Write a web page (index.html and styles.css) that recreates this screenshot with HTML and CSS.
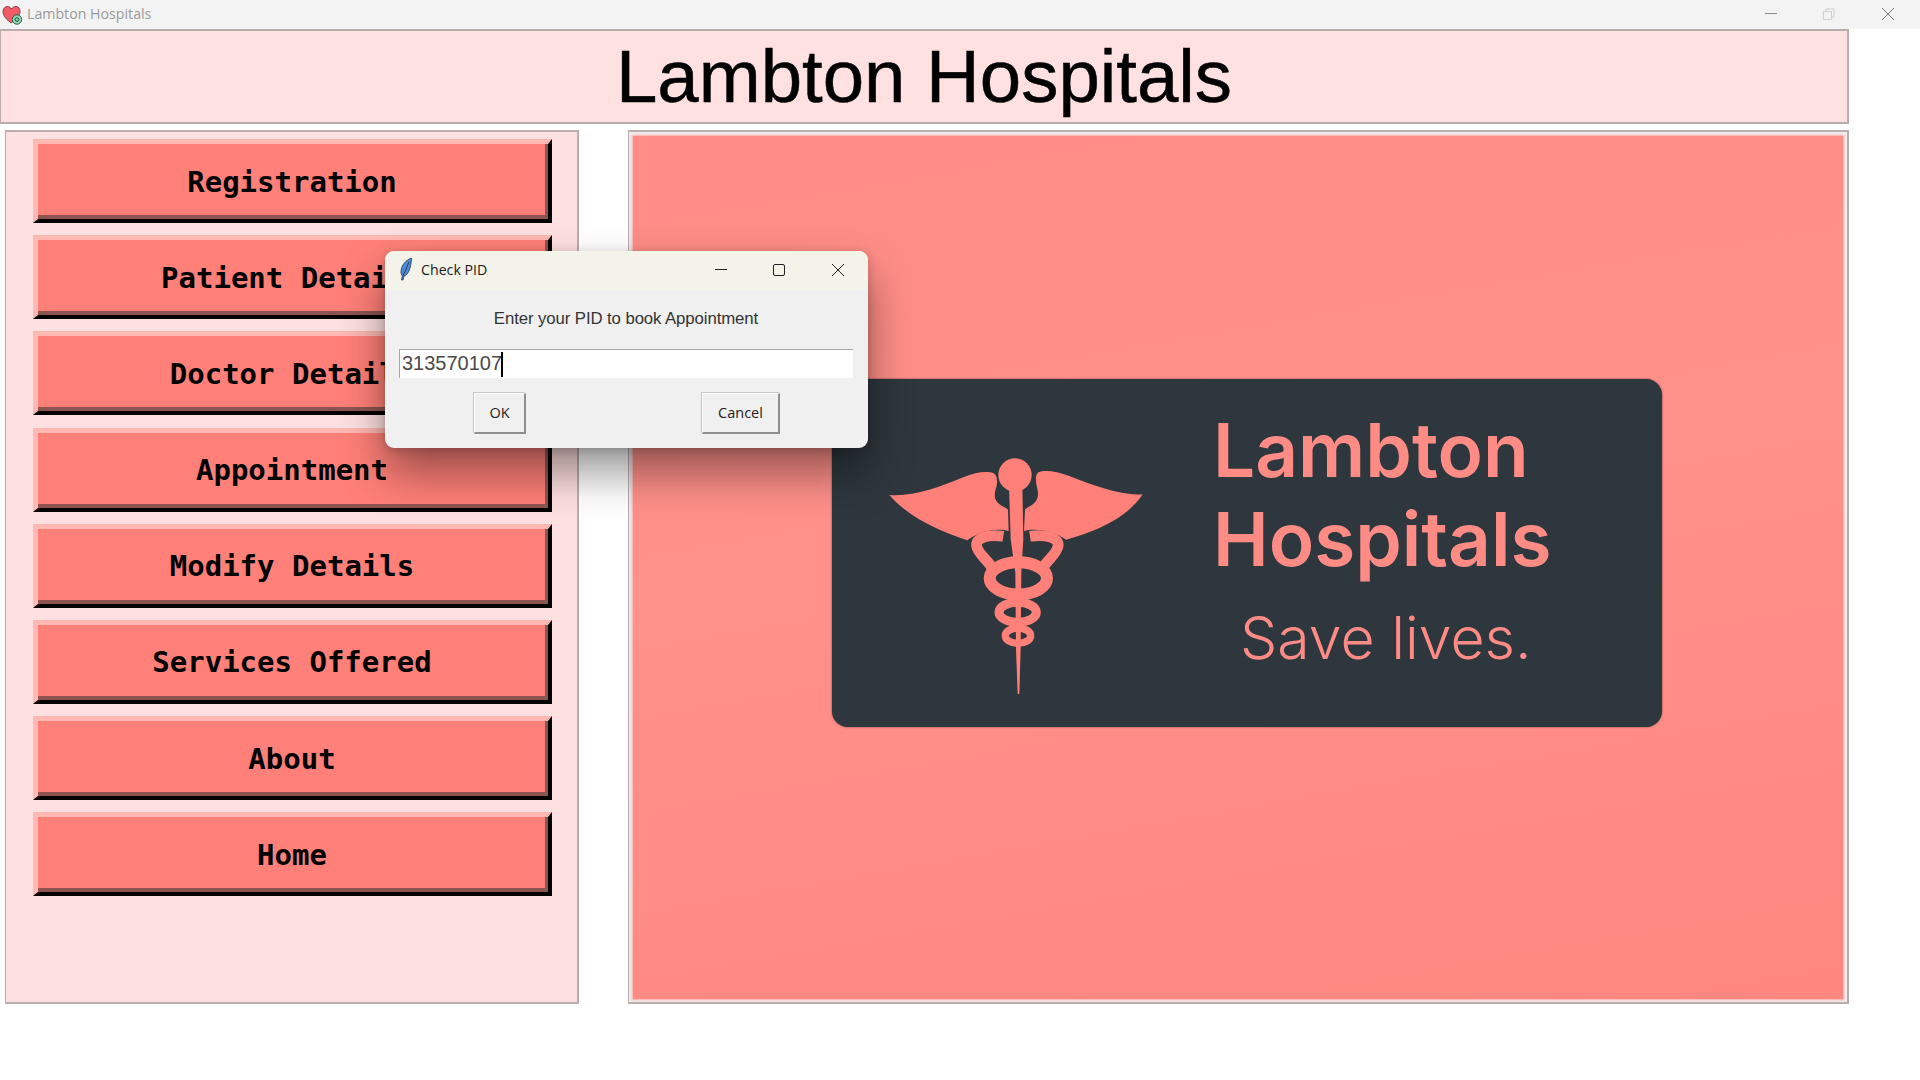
FILE: index.html
```html
<!DOCTYPE html>
<html lang="en">
<head>
<meta charset="utf-8">
<title>Lambton Hospitals</title>
<link rel="stylesheet" href="styles.css">
</head>
<body>
<div class="app">
  <div class="titlebar">
    <svg class="app-icon" viewBox="0 0 20 20" width="20" height="20">
      <path d="M9 18 C5 15 1 11 1 6.500 C1 3 3.500 1.500 5.500 1.500 C7.300 1.500 8.500 2.500 9.500 4 C10.500 2.500 12 1.500 14 1.500 C16.500 1.500 18 3.500 18 6.500 C18 11 13 15 9 18 Z" fill="#f25a68" stroke="#6e2a33" stroke-width="0.8"/>
      <circle cx="15" cy="14.500" r="4.700" fill="#8fd6b0" stroke="#2c5a4a" stroke-width="1"/>
      <circle cx="15" cy="14.500" r="1.800" fill="none" stroke="#1f4a3a" stroke-width="1"/>
    </svg>
    <span class="app-name">Lambton Hospitals</span>
    <div class="win-controls">
      <svg viewBox="0 0 14 14" width="14" height="14"><path d="M1 6.500H13" stroke="#8a8a8a" stroke-width="1" fill="none"/></svg>
      <svg viewBox="0 0 14 14" width="14" height="14"><path d="M1.500 4.500H9.500V12.500H1.500Z M4 4.500V2H12V10H9.500" stroke="#cfcfcf" stroke-width="1" fill="none"/></svg>
      <svg viewBox="0 0 14 14" width="14" height="14"><path d="M1 1L13 13M13 1L1 13" stroke="#7a7a7a" stroke-width="1" fill="none"/></svg>
    </div>
  </div>

  <header class="banner"><h1 class="banner-title">Lambton Hospitals</h1></header>

  <main class="columns">
    <nav class="menu">
      <button class="menu-btn"><span class="menu-face">Registration</span></button>
      <button class="menu-btn"><span class="menu-face">Patient Details</span></button>
      <button class="menu-btn"><span class="menu-face">Doctor Details</span></button>
      <button class="menu-btn"><span class="menu-face">Appointment</span></button>
      <button class="menu-btn"><span class="menu-face">Modify Details</span></button>
      <button class="menu-btn"><span class="menu-face">Services Offered</span></button>
      <button class="menu-btn"><span class="menu-face">About</span></button>
      <button class="menu-btn"><span class="menu-face">Home</span></button>
    </nav>

    <section class="picture-frame">
      <div class="picture">
        <div class="logo">
          <svg class="caduceus" viewBox="0 0 900 810" width="300" height="270">
            <path class="c-fill" d="M88 168 C150 175 240 145 310 115 C345 100 380 95 400 102 C412 108 412 125 410 140 C404 160 400 175 412 190 C425 203 438 206 444 212 L446 276 C420 268 365 270 322 304 C250 280 150 240 88 168 Z"/>
            <path class="c-fill" d="M848 166 C790 172 700 140 630 112 C590 97 555 92 535 100 C525 108 527 125 530 140 C535 160 537 175 525 190 C512 203 500 206 495 212 L492 276 C520 268 575 270 618 302 C700 280 800 240 848 166 Z"/>
            <circle class="c-fill" cx="465" cy="108" r="50"/>
            <path class="c-fill" d="M447 140 H487 L490 300 L484 400 L482 630 L478 765 H473 L468 630 L466 400 L452 300 Z"/>
            <path class="c-snake" stroke-width="32" d="M430 292 C385 285 345 295 350 322 C354 345 385 365 395 385"/>
            <path class="c-snake" stroke-width="32" d="M510 292 C555 285 600 295 594 322 C590 345 560 365 550 385"/>
            <ellipse class="c-snake" stroke-width="36" cx="475" cy="418" rx="86" ry="48"/>
            <ellipse class="c-snake" stroke-width="27" cx="473" cy="520" rx="56" ry="30"/>
            <ellipse class="c-snake" stroke-width="22" cx="474" cy="590" rx="38" ry="23"/>
          </svg>
          <div class="logo-text">
            <div class="logo-name">Lambton<br>Hospitals</div>
            <div class="logo-tag">Save lives.</div>
          </div>
        </div>
      </div>
    </section>
  </main>
</div>

<div class="dialog">
  <div class="dialog-bar">
    <svg class="feather" viewBox="0 0 14 24" width="14" height="24">
      <path d="M12.500 1 C7 3 2.500 8 2 14 C1.800 16.500 2.500 18 3.500 19 L2.500 23 L4 23 L5 19 C9 18 12 12 12.500 1 Z" fill="#4f8bd6" stroke="#27364a" stroke-width="0.8"/>
      <path d="M10 5 L4 19" stroke="#1d2c44" stroke-width="0.8" fill="none"/>
    </svg>
    <span class="dialog-title">Check PID</span>
    <div class="dialog-controls">
      <svg viewBox="0 0 14 14" width="14" height="14"><path d="M1 6.500H13" stroke="#222" stroke-width="1" fill="none"/></svg>
      <svg viewBox="0 0 14 14" width="14" height="14"><rect x="1.500" y="1.500" width="11" height="11" rx="1.500" stroke="#222" stroke-width="1" fill="none"/></svg>
      <svg viewBox="0 0 14 14" width="14" height="14"><path d="M1 1L13 13M13 1L1 13" stroke="#222" stroke-width="1" fill="none"/></svg>
    </div>
  </div>
  <div class="dialog-body">
    <p class="dialog-label">Enter your PID to book Appointment</p>
    <div class="entry"><span class="entry-text">313570107</span><span class="caret"></span></div>
    <div class="dialog-actions">
      <button class="tk-btn tk-ok">OK</button>
      <button class="tk-btn tk-cancel">Cancel</button>
    </div>
  </div>
</div>
</body>
</html>
```

FILE: styles.css
```css
* { box-sizing: border-box; }

html, body {
  margin: 0;
  height: 100%;
  background: #fff;
  overflow: hidden;
}

.app {
  width: 1920px;
  height: 1080px;
  display: flex;
  flex-direction: column;
}

/* main window title bar */
.titlebar {
  height: 29px;
  flex: none;
  background: #f3f3f3;
  display: flex;
  align-items: center;
  padding-left: 2px;
}
.app-icon { flex: none; margin-top: 1px; }
.app-name {
  margin: -2px 0 0 5px;
  font: 14.200px "Open Sans", sans-serif;
  color: #9a9a9a;
}
.win-controls {
  margin-left: auto;
  display: flex;
  gap: 45px;
  padding-right: 25px;
  margin-top: -2px;
}
.win-controls svg { display: block; }
.win-controls svg:first-child { margin-right: -1px; }

/* banner */
.banner {
  width: 1849px;
  height: 95px;
  flex: none;
  background: #ffe1e1;
  border: 2px solid #b9adad;
  border-left-width: 1px;
  padding-top: 2px;
  display: flex;
  align-items: center;
  justify-content: center;
}
.banner-title {
  margin: 0;
  font: 400 74.400px/1 "Liberation Sans", Arial, sans-serif;
  -webkit-text-stroke: 0.5px #000;
  color: #000;
}

/* two columns */
.columns {
  display: flex;
  gap: 49px;
  margin: 6px 0 0 5px;
  height: 874px;
}

.menu {
  width: 574px;
  background: #ffe0e0;
  border: 2px solid #b9adad;
  border-width: 2px 2px 2px 1px;
  padding: 7px 0 0 27px;
  display: flex;
  flex-direction: column;
  gap: 12.200px;
}

.menu-btn {
  display: block;
  width: 519px;
  height: 84px;
  flex: none;
  padding: 0;
  background: #ff8078;
  border-style: solid;
  border-width: 5px 4px 4px 5px;
  border-color: #ffb9b2 #000 #000 #ffb9b2;
  font: 700 29px "DejaVu Sans Mono", monospace;
  color: #000;
  cursor: pointer;
}
.menu-face {
  display: flex;
  width: 100%;
  height: 100%;
  align-items: center;
  justify-content: center;
  border-style: solid;
  border-width: 0 3px 4px 0;
  border-color: transparent #8f5450 #8f5450 transparent;
  padding: 4px 0 0 1px;
  white-space: pre;
}

/* picture */
.picture-frame {
  width: 1221px;
  background: #f0ecec;
  border: 2px solid #b9adad;
  border-width: 2px 2px 2px 1px;
  padding: 4px 4px 3px 4px;
}
.picture {
  height: 100%;
  background: linear-gradient(170deg, #ff8c86 0%, #ff908a 45%, #ff8780 100%);
  box-shadow: 0 0 2px 1px #ffa8a2;
  display: flex;
  padding: 243px 0 0 199px;
}
.logo {
  width: 830px;
  height: 348px;
  background: #2e373e;
  border-radius: 16px;
  box-shadow: 0 0 2px #5a3a3e;
  display: flex;
  align-items: flex-start;
  padding: 60px 0 0 28px;
}
.caduceus { display: block; flex: none; }
.c-fill { fill: #ff8078; }
.c-snake { fill: none; stroke: #ff8078; }

.logo-text {
  margin: -33px 0 0 53px;
  font-family: Inter, sans-serif;
  color: #ff8b85;
}
.logo-name {
  font-size: 74.700px;
  font-weight: 600;
  line-height: 89px;
}
.logo-tag {
  font-size: 59px;
  font-weight: 300;
  line-height: 72px;
  margin: 18px 0 0 27px;
}

/* dialog */
.dialog {
  position: absolute;
  left: 385px;
  top: 251px;
  width: 483px;
  height: 197px;
  border-radius: 9px;
  background: #f0f0f0;
  box-shadow: 0 24px 46px rgba(0, 0, 0, 0.42), 0 2px 10px rgba(0, 0, 0, 0.18);
  display: flex;
  flex-direction: column;
}
.dialog-bar {
  height: 39px;
  flex: none;
  background: #f3f3ea;
  border-radius: 9px 9px 0 0;
  display: flex;
  align-items: center;
  padding: 0 0 2px 14px;
}
.feather { display: block; margin-top: -2px; }
.dialog-title {
  margin-left: 8px;
  font: 14.200px "Open Sans", sans-serif;
  color: #1a1a1a;
}
.dialog-controls {
  margin-left: auto;
  display: flex;
  gap: 44px;
  padding-right: 23px;
}
.dialog-controls svg { display: block; }
.dialog-controls svg:nth-child(2) { margin-right: 1px; }

.dialog-body {
  flex: 1;
  display: flex;
  flex-direction: column;
  padding: 18px 15px 0 14px;
}
.dialog-label {
  margin: 0;
  text-align: center;
  font: 16.800px/22px "Liberation Sans", Arial, sans-serif;
  letter-spacing: -0.1px;
  color: #333;
}
.entry {
  margin-top: 19px;
  height: 29px;
  background: #fff;
  border-top: 1px solid #a8a8a8;
  border-left: 1px solid #a8a8a8;
  display: flex;
  align-items: center;
  padding-left: 2px;
}
.entry-text {
  font: 20px "Liberation Sans", Arial, sans-serif;
  color: #4a4a4a;
  margin-top: -1px;
}
.caret {
  width: 2px;
  height: 25px;
  background: #000;
  margin-left: -1px;
}
.dialog-actions {
  display: flex;
  margin-top: 15px;
  padding-left: 75px;
}
.tk-btn {
  height: 41px;
  padding: 0 0 1px;
  background: #f0f0f0;
  border-style: solid;
  border-width: 1px 2px 2px 1px;
  border-color: #fbfbfb #8f8f8f #8f8f8f #fbfbfb;
  box-shadow: -1px -1px 0 #c8c8c8;
  font: 14.500px "Open Sans", sans-serif;
  color: #222;
}
.tk-ok { width: 52px; }
.tk-cancel { width: 78px; margin-left: 176px; }
```
